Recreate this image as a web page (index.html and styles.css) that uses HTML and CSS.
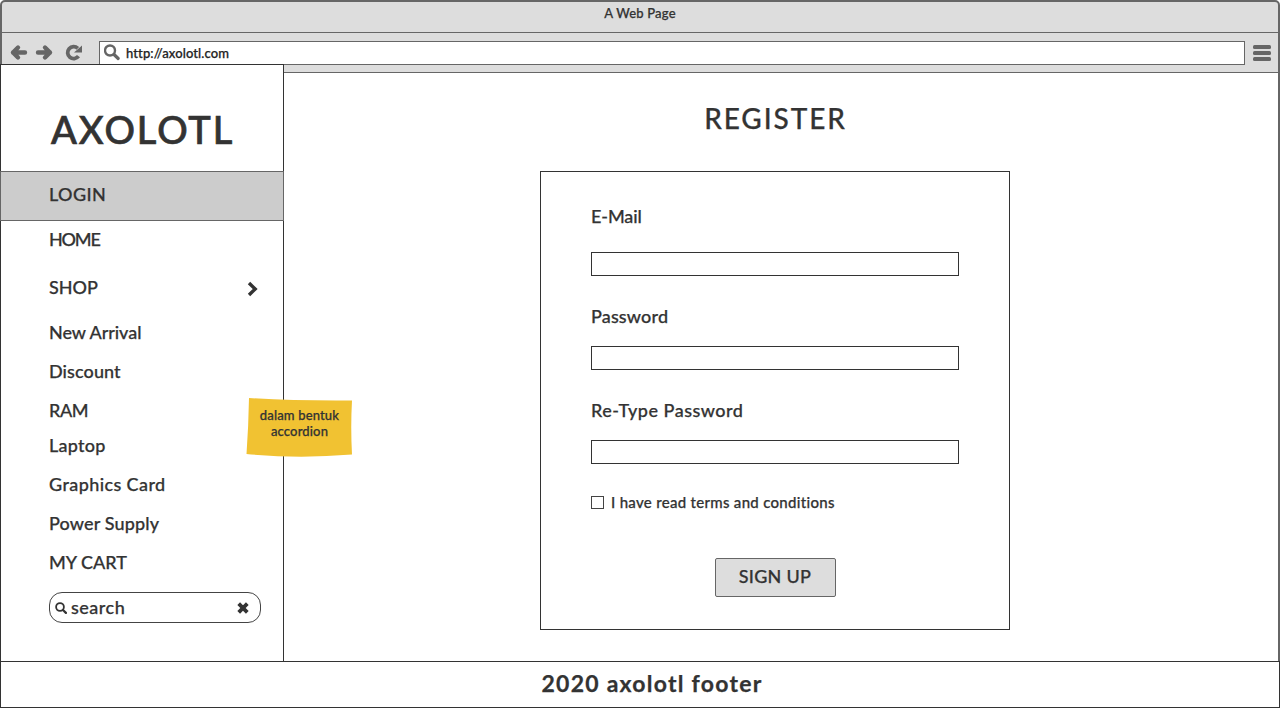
FILE: index.html
```html
<!DOCTYPE html>
<html lang="id">
<head>
<meta charset="utf-8">
<title>A Web Page</title>
<link rel="stylesheet" href="styles.css">
</head>
<body>
<div class="browser">
  <header class="chrome">
    <div class="titlebar"><span class="t-title">A Web Page</span></div>
    <div class="toolbar">
      <svg class="nav-icons" width="76" height="20" viewBox="0 0 76 20" fill="none" stroke="#666" stroke-width="4.400" stroke-linecap="round" stroke-linejoin="round">
        <path d="M5 9.500H17M10 4.500L5 9.500L10 14.500"/>
        <path d="M30 9.500H42M37 4.500L42 9.500L37 14.500"/>
        <path d="M70.500 13.200A6 6 0 1 1 69.800 5.300" stroke-width="3.800" stroke-linecap="butt"/>
        <path d="M74 2.500V9.500H66Z" fill="#666" stroke="none"/>
      </svg>
      <div class="address">
        <svg width="18" height="18" viewBox="0 0 18 18" fill="none" stroke="#666"><circle cx="6" cy="6.500" r="5" stroke-width="2.400"/><path d="M10 10.500L14.200 14.500" stroke-width="3.200" stroke-linecap="round"/></svg>
        <span class="t-url">http://axolotl.com</span>
      </div>
      <svg class="burger" width="18" height="16" viewBox="0 0 18 16" fill="#666"><rect width="18" height="4" rx="1.500"/><rect y="6" width="18" height="4" rx="1.500"/><rect y="12" width="18" height="4" rx="1.500"/></svg>
    </div>
  </header>
  <div class="page">
    <aside class="sidebar">
      <h1 class="brand">AXOLOTL</h1>
      <nav class="menu">
        <a class="item active"><span class="t-login">LOGIN</span></a>
        <a class="item home"><span class="t-home">HOME</span></a>
        <a class="item shop"><span class="t-shop">SHOP</span>
          <svg class="chevron" width="12" height="16" viewBox="0 0 12 16" fill="none" stroke="#333" stroke-width="3.400"><path d="M2 2L8.200 8L2 14"/></svg>
        </a>
        <a class="item"><span class="t-new">New Arrival</span></a>
        <a class="item"><span class="t-disc">Discount</span></a>
        <a class="item ram"><span class="t-ram">RAM</span></a>
        <a class="item"><span class="t-lap">Laptop</span></a>
        <a class="item"><span class="t-gfx">Graphics Card</span></a>
        <a class="item"><span class="t-pow">Power Supply</span></a>
        <a class="item"><span class="t-cart">MY CART</span></a>
      </nav>
      <div class="search">
        <svg width="12" height="12" viewBox="0 0 12 12" fill="none" stroke="#333"><circle cx="5" cy="5" r="3.900" stroke-width="1.800"/><path d="M8 8L10.900 10.900" stroke-width="2.200" stroke-linecap="round"/></svg>
        <span class="t-search">search</span>
        <svg class="clear" width="12" height="12" viewBox="0 0 12 12" stroke="#333" stroke-width="3.800"><path d="M1.700 1.700L10.300 10.300M10.300 1.700L1.700 10.300"/></svg>
      </div>
      <div class="note">
        <svg class="note-paper" width="107" height="60" viewBox="0 0 107 60"><path d="M3 0Q50 3 106 2.500Q104.500 29 106 56.500Q52 61 0.500 56Q2.500 28 3 0Z" fill="#f1c232"/></svg>
        <p class="note-text"><span class="t-n1">dalam bentuk</span><br><span class="t-n2">accordion</span></p>
      </div>
    </aside>
    <main class="content">
      <h2 class="heading">REGISTER</h2>
      <form class="card">
        <label class="t-email" for="email">E-Mail</label>
        <input class="field first" id="email" type="text">
        <label class="t-pass" for="pw">Password</label>
        <input class="field" id="pw" type="password">
        <label class="t-repass" for="pw2">Re-Type Password</label>
        <input class="field" id="pw2" type="password">
        <div class="terms"><span class="box"></span><span class="t-terms">I have read terms and conditions</span></div>
        <button class="submit" type="button">SIGN UP</button>
      </form>
    </main>
  </div>
  <footer class="footer"><span class="t-footer">2020 axolotl footer</span></footer>
</div>
</body>
</html>
```
FILE: styles.css
```css
* { box-sizing: border-box; }
body { margin: 0; background: #fff; color: #333; font: 500 18px/24px Lato, "Open Sans", sans-serif; white-space: nowrap; overflow: hidden; -webkit-text-stroke: .25px; }
svg { display: block; flex: none; }
h1, h2, p { margin: 0; font-weight: 500; }
.browser { display: flex; flex-direction: column; width: 1280px; height: 708px; }
.chrome { flex: none; height: 73px; background: #ddd; border: 2px solid #666; border-bottom: 1px solid #666; border-radius: 5px 5px 0 0; }
.titlebar { height: 31px; border-bottom: 1px solid #666; text-align: center; font-size: 13px; line-height: 23px; }
.toolbar { display: flex; align-items: flex-start; padding: 8px 7px 0 6px; }
.nav-icons { margin: 2px 15px 0 0; }
.address { display: flex; align-items: center; width: 1146px; height: 24px; background: #fff; border: 1px solid #666; padding-left: 4px; gap: 4px; color: #222; font-size: 13px; }
.burger { margin: 4px 0 0 8px; }
.page { display: flex; height: 588px; border-right: 2px solid #666; }
.sidebar { position: relative; z-index: 1; display: flex; flex: none; flex-direction: column; width: 284px; height: 597px; margin-top: -9px; background: #fff; border: 1px solid #333; border-bottom: 0; }
.brand { height: 106px; padding: 40px 0 0 50px; font-size: 38px; line-height: 48px; letter-spacing: 1.9px; -webkit-text-stroke: .7px; }
.menu { display: flex; flex-direction: column; gap: 15px; }
.item { display: flex; align-items: center; height: 24px; padding: 0 0 2px 48px; }
.item.active { height: 50px; margin: 0 -1px; padding-bottom: 4px; background: #ccc; border: 1px solid #666; }
.item.home { margin-top: -8px; }
.item.shop { justify-content: space-between; margin: 9px 24px 6px 0; }
.chevron { margin-top: 4px; }
.item.ram { margin-bottom: -4px; }
.search { display: flex; align-items: center; flex: none; width: 212px; height: 31px; margin: 17px 0 0 48px; padding: 0 11px 0 5px; gap: 4px; border: 1px solid #444; border-radius: 13px; }
.clear { margin-left: auto; }
.note { position: absolute; left: 245px; top: 333px; width: 107px; height: 60px; }
.note-paper { position: absolute; }
.note-text { position: relative; padding-top: 9px; text-align: center; font-size: 13px; line-height: 16px; }
.content { display: flex; flex-direction: column; align-items: center; width: 982px; padding-top: 25px; }
.heading { height: 73px; margin-right: -1px; font-size: 28px; line-height: 40px; letter-spacing: 1.9px; }
.card { display: flex; flex-direction: column; align-items: flex-start; width: 470px; height: 459px; padding: 32px 50px 0; border: 1px solid #333; }
.field { width: 368px; height: 24px; margin: 18px 0 28px; padding: 0 6px; border: 1px solid #333; background: #fff; font: inherit; outline: 0; }
.field.first { margin-top: 24px; }
.terms { display: flex; align-items: center; gap: 7px; height: 20px; margin-top: 1px; font-size: 15px; }
.box { width: 13px; height: 13px; margin-top: -2px; border: 1px solid #444; }
.submit { width: 121px; height: 39px; margin-top: 45px; padding: 0 0 4px; align-self: center; background: #ddd; border: 1px solid #666; border-radius: 2px; color: #333; font: inherit; letter-spacing: .3px; }
.footer { height: 47px; border: 1px solid #333; text-align: center; font-size: 23px; font-weight: 700; line-height: 43px; padding-left: 24px; }

/* Tracking per label */
.t-title { letter-spacing: .2px; }
.t-url { letter-spacing: .1px; }
.t-login { letter-spacing: .4px; }
.t-home { letter-spacing: -1.2px; }
.t-new { letter-spacing: -.05px; }
.t-disc { letter-spacing: .1px; }
.t-ram { letter-spacing: -.4px; }
.t-lap { letter-spacing: .25px; }
.t-gfx { letter-spacing: .4px; }
.t-pow { letter-spacing: .15px; }
.t-search { margin-top: -2px; letter-spacing: .5px; }
.t-n1, .t-n2 { letter-spacing: .15px; }
.t-email { letter-spacing: -.1px; }
.t-pass { letter-spacing: .15px; }
.t-repass { letter-spacing: .5px; }
.t-terms { margin-top: -2px; letter-spacing: .3px; }
.t-footer { letter-spacing: 1.250px; }
```
